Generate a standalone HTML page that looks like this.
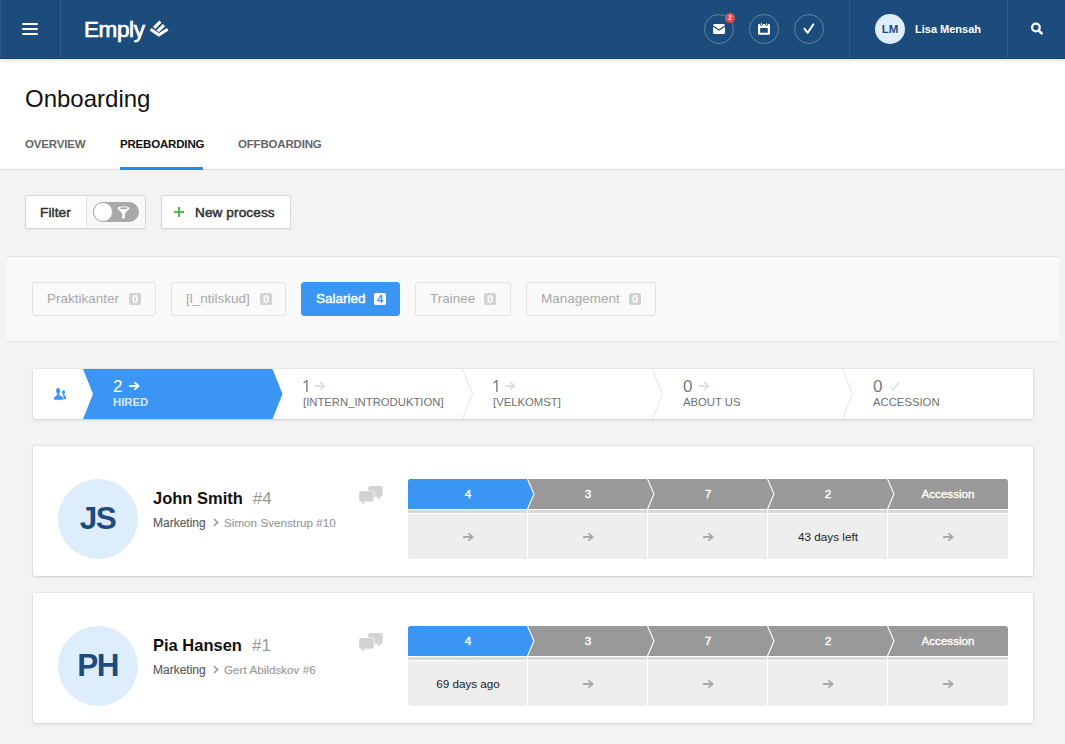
<!DOCTYPE html>
<html><head><meta charset="utf-8">
<style>
*{box-sizing:border-box;margin:0;padding:0}
html,body{width:1065px;height:744px;overflow:hidden;background:#f3f3f3;font-family:"Liberation Sans",sans-serif;color:#222}
.abs{position:absolute}
#hdr{position:absolute;left:0;top:0;width:1065px;height:59px;background:#1c4c7c;border-bottom:1px solid #133f6f;box-shadow:0 1px 5px rgba(0,0,0,0.13);z-index:2}
.vdiv{position:absolute;top:0;width:1px;height:58px;background:#345e88}
.circ{position:absolute;top:14px;width:30px;height:30px;border-radius:50%;border:1px solid rgba(255,255,255,0.3)}
#top{position:absolute;left:0;top:59px;width:1065px;height:111px;background:#fff;border-bottom:1px solid #e2e2e2}
h1{position:absolute;left:25px;top:85px;font-size:24px;font-weight:normal;color:#111}
.tab{position:absolute;top:138px;font-size:11.5px;font-weight:bold;color:#666;letter-spacing:-0.18px}
.btn{position:absolute;top:195px;height:34px;background:#fff;border:1px solid #d6d6d6;border-radius:2px;box-shadow:0 1px 1px rgba(0,0,0,0.06)}
#cats{position:absolute;left:7px;top:256px;width:1052px;height:86px;background:#f9f9f9;border-top:1px solid #e6e6e6;border-bottom:1px solid #e6e6e6}
.chip{position:absolute;top:282px;height:34px;border:1px solid #e2e2e2;border-radius:3px;background:#fafafa;color:#a8a8a8;font-size:13.5px;line-height:32px}
.chip b{display:block;font-weight:bold;font-size:11px;background:#d2d2d2;color:#fff;width:12px;height:12px;line-height:12px;text-align:center;border-radius:2px;position:absolute;top:10px}
#pipe{position:absolute;left:33px;top:369px;width:1000px;height:50px;background:#fff;border-radius:2px;box-shadow:0 0 0 1px rgba(0,0,0,0.035),0 1px 3px rgba(0,0,0,0.13)}
.card{position:absolute;left:33px;width:1000px;height:130px;background:#fff;border-radius:2px;box-shadow:0 0 0 1px rgba(0,0,0,0.035),0 1px 3px rgba(0,0,0,0.13)}
.ct{position:absolute;left:14px;top:0}
.pn{position:absolute;top:8px;font-size:17px;color:#7a7a7a;line-height:20px;white-space:nowrap}
.ia{position:absolute;left:16px;top:5px;line-height:0}
.pl{position:absolute;top:27px;font-size:11.3px;color:#707070;line-height:12px;white-space:nowrap}
.av{position:absolute;left:25px;top:33px;width:80px;height:80px;border-radius:50%;background:#deedfc;color:#1e4b7e;font-size:31.5px;font-weight:bold;text-align:center;line-height:79px;letter-spacing:-1.6px;text-indent:-1px}
.nm{position:absolute;left:120px;top:43px;font-size:16.5px;font-weight:bold;color:#111;white-space:nowrap}
.nm span{font-weight:normal;color:#999;margin-left:10px;font-size:17px}
.bc{position:absolute;left:120px;top:70px;font-size:12px;color:#5f5f5f;white-space:nowrap;width:250px;-webkit-text-stroke:0.2px #5f5f5f}
.bc span{position:absolute;left:71px;top:0;color:#999;font-size:11.6px;letter-spacing:0.05px;-webkit-text-stroke:0.15px #999}
.sh{position:absolute;width:120px;height:30px;line-height:30px;text-align:center;color:#fff;font-size:11.8px;-webkit-text-stroke:0.4px #fff}
.sb{position:absolute;width:120px;height:45px;line-height:46px;text-align:center;color:#222;font-size:11.7px}
.sb svg{vertical-align:middle;margin-top:-1px;margin-left:1px}
</style></head><body>
<div id="hdr">
  <div class="vdiv" style="left:0;background:#2e5788"></div>
  <div class="abs" style="left:22px;top:23px;width:16px;height:2px;background:#fff;border-radius:1px"></div>
  <div class="abs" style="left:22px;top:28px;width:16px;height:2px;background:#fff;border-radius:1px"></div>
  <div class="abs" style="left:22px;top:33px;width:16px;height:2px;background:#fff;border-radius:1px"></div>
  <div class="vdiv" style="left:60px"></div>
  <div class="abs" style="left:84px;top:17px;font-size:22.5px;color:#fff;-webkit-text-stroke:0.7px #fff;letter-spacing:-0.4px">Emply</div>
  <svg class="abs" style="left:146px;top:17px" width="26" height="24" viewBox="146 17 26 24">
    <path d="M150.6 29.2 L158.9 35 L167.6 29.2" fill="none" stroke="#fff" stroke-width="3.1" stroke-linejoin="round"/>
    <path d="M157.6 31.2 L164 25.2" fill="none" stroke="#fff" stroke-width="3.1"/>
    <path d="M154.1 27.8 L160.4 21.6" fill="none" stroke="#fff" stroke-width="3.1"/>
  </svg>
  <div class="circ" style="left:704px"></div>
  <svg class="abs" style="left:713px;top:24px" width="12" height="10" viewBox="0 0 12 10">
    <rect x="0" y="0" width="12" height="10" rx="1.5" fill="#fff"/>
    <path d="M0 2 L6 6 L12 2" fill="none" stroke="#1c4c7c" stroke-width="1.05"/>
  </svg>
  <div class="abs" style="left:725px;top:13px;width:10px;height:10px;border-radius:50%;background:#e84a4a;color:#fff;font-size:6.5px;font-weight:bold;text-align:center;line-height:10px">2</div>
  <div class="circ" style="left:749px"></div>
  <svg class="abs" style="left:758px;top:23px" width="12" height="12" viewBox="0 0 12 12">
    <path d="M1.2 1.1 H10.8 A1.2 1.2 0 0 1 12 2.3 V10.6 A1.2 1.2 0 0 1 10.8 11.8 H1.2 A1.2 1.2 0 0 1 0 10.6 V2.3 A1.2 1.2 0 0 1 1.2 1.1 Z M2.1 5.1 V9.7 H9.8 V5.1 Z" fill="#fff" fill-rule="evenodd"/>
    <path d="M2.1 1 H4.7 V1.6 A1.3 1.3 0 0 1 2.1 1.6 Z M7.2 1 H9.8 V1.6 A1.3 1.3 0 0 1 7.2 1.6 Z" fill="#1c4c7c"/>
    <rect x="2.95" y="0" width="0.95" height="1.9" rx="0.45" fill="#fff"/>
    <rect x="8.05" y="0" width="0.95" height="1.9" rx="0.45" fill="#fff"/>
  </svg>
  <div class="circ" style="left:794px"></div>
  <svg class="abs" style="left:803px;top:23px" width="12" height="12" viewBox="0 0 12 12">
    <path d="M1.5 5.6 L4.6 9.9 L10.4 1.4" fill="none" stroke="#fff" stroke-width="1.9" stroke-linecap="round" stroke-linejoin="round"/>
  </svg>
  <div class="vdiv" style="left:849px"></div>
  <div class="abs" style="left:875px;top:14px;width:30px;height:30px;border-radius:50%;background:#deeefc;color:#1e4a7a;font-size:11.5px;font-weight:bold;text-align:center;line-height:30px">LM</div>
  <div class="abs" style="left:915px;top:23px;font-size:11px;font-weight:bold;color:#fff">Lisa Mensah</div>
  <div class="vdiv" style="left:1007px"></div>
  <svg class="abs" style="left:1031px;top:22px" width="13" height="13" viewBox="0 0 13 13">
    <circle cx="4.9" cy="5.5" r="3.8" fill="none" stroke="#fff" stroke-width="2.3"/>
    <path d="M7.6 8.3 L10.6 11.4" stroke="#fff" stroke-width="2.6" stroke-linecap="round"/>
  </svg>
</div>

<div id="top"></div>
<h1>Onboarding</h1>
<div class="tab" style="left:25px">OVERVIEW</div>
<div class="tab" style="left:120px;color:#111">PREBOARDING</div>
<div class="abs" style="left:120px;top:167px;width:83px;height:3px;background:#1a8df6"></div>
<div class="tab" style="left:238px">OFFBOARDING</div>


<!-- buttons -->
<div class="btn" style="left:25px;width:121px;overflow:hidden">
  <div class="abs" style="left:60px;top:0;width:60px;height:32px;background:#f8f8f8;border-left:1px solid #e4e4e4"></div>
  <div class="abs" style="left:14px;top:8.5px;font-size:13.6px;color:#333;-webkit-text-stroke:0.5px #333;letter-spacing:0.1px">Filter</div>
  <div class="abs" style="left:67px;top:6px;width:46px;height:20px;border-radius:10px;background:#a8a8a8"></div>
  <div class="abs" style="left:67px;top:6px;width:20px;height:20px;border-radius:50%;background:#fff;border:1px solid #b0b0b0"></div>
  <svg class="abs" style="left:91px;top:10px" width="13" height="13" viewBox="0 0 13 13">
    <ellipse cx="6.5" cy="2.4" rx="6" ry="2.2" fill="#fff"/>
    <path d="M0.5 2.4 L5.2 7.6 V12.5 H7.8 V7.6 L12.5 2.4 Z" fill="#fff"/>
    <ellipse cx="6.5" cy="2.2" rx="4" ry="1" fill="#a8a8a8"/>
  </svg>
</div>
<div class="btn" style="left:161px;width:130px">
  <svg class="abs" style="left:12px;top:11px" width="10" height="10" viewBox="0 0 10 10">
    <rect x="4" y="0" width="2" height="10" fill="#4cba4c"/>
    <rect x="0" y="4" width="10" height="2" fill="#4cba4c"/>
  </svg>
  <div class="abs" style="left:33px;top:8.5px;font-size:13.6px;color:#333;-webkit-text-stroke:0.5px #333;letter-spacing:0.1px">New process</div>
</div>

<div id="cats"></div>
<div class="chip" style="left:32px;width:124px"><span class="ct">Praktikanter</span><b style="left:96px">0</b></div>
<div class="chip" style="left:171px;width:115px"><span class="ct">[l_ntilskud]</span><b style="left:88px">0</b></div>
<div class="chip" style="left:301px;width:99px;background:#3b96f3;border-color:#3b96f3;color:#fff"><span class="ct" style="font-size:13.5px;-webkit-text-stroke:0.4px #fff">Salaried</span><b style="left:72px;background:#fff;color:#3b96f3">4</b></div>
<div class="chip" style="left:415px;width:96px"><span class="ct">Trainee</span><b style="left:68px">0</b></div>
<div class="chip" style="left:526px;width:130px"><span class="ct">Management</span><b style="left:102px">0</b></div>

<!-- pipeline -->
<div id="pipe">
  <svg class="abs" style="left:0;top:0" width="1000" height="50" viewBox="33 369 1000 50">
    <path d="M83 369 H272.5 L282.5 394 L272.5 419 H83 L93 394 Z" fill="#3b96f3"/>
    <path d="M462.5 369 L472.5 394 L462.5 419" fill="none" stroke="#e6e6e6" stroke-width="1"/>
    <path d="M652.5 369 L662.5 394 L652.5 419" fill="none" stroke="#e6e6e6" stroke-width="1"/>
    <path d="M842.5 369 L852.5 394 L842.5 419" fill="none" stroke="#e6e6e6" stroke-width="1"/>
  </svg>
  <svg class="abs" style="left:21px;top:19px" width="13" height="13" viewBox="0 0 13 13">
    <ellipse cx="9.5" cy="4.1" rx="1.5" ry="1.85" fill="#3b96f3"/>
    <path d="M8.9 5.6 H10.2 V7.1 C11.3 7.5 12 8.2 12 9.3 V11 H9.4 V8.4 Z" fill="#3b96f3"/>
    <path d="M2.9 5.2 H5.4 V7.4 C7.6 7.9 9.3 8.6 9.3 9.8 V11.8 H0.1 V9.8 C0.1 8.6 1.6 7.9 2.9 7.4 Z" fill="#3b96f3" stroke="#fff" stroke-width="0.9" paint-order="stroke"/>
    <ellipse cx="4.1" cy="2.8" rx="2" ry="2.75" fill="#3b96f3"/>
  </svg>
  <div class="pn" style="left:80px;color:#fff">2<span class="ia"><svg width="11" height="8" viewBox="0 0 11 8"><path d="M0.5 4 H9 M6 0.9 L9.5 4 L6 7.1" fill="none" stroke="#fff" stroke-width="1.9" stroke-linecap="round" stroke-linejoin="round"/></svg></span></div>
  <div class="pl" style="left:80px;color:rgba(255,255,255,0.8);font-weight:bold">HIRED</div>
  <div class="pn" style="left:270px"><svg width="6" height="13" viewBox="0 0 6 13" style="position:absolute;left:0;top:3px"><path d="M0.6 3 L3.9 0.5 V11.9" fill="none" stroke="#7a7a7a" stroke-width="1.35" stroke-linejoin="round"/></svg><span class="ia" style="left:12px"><svg width="11" height="8" viewBox="0 0 11 8"><path d="M0.5 4 H9 M6 0.9 L9.5 4 L6 7.1" fill="none" stroke="#e0e0e0" stroke-width="1.9" stroke-linecap="round" stroke-linejoin="round"/></svg></span></div>
  <div class="pl" style="left:270px">[INTERN_INTRODUKTION]</div>
  <div class="pn" style="left:460px"><svg width="6" height="13" viewBox="0 0 6 13" style="position:absolute;left:0;top:3px"><path d="M0.6 3 L3.9 0.5 V11.9" fill="none" stroke="#7a7a7a" stroke-width="1.35" stroke-linejoin="round"/></svg><span class="ia" style="left:12px"><svg width="11" height="8" viewBox="0 0 11 8"><path d="M0.5 4 H9 M6 0.9 L9.5 4 L6 7.1" fill="none" stroke="#e0e0e0" stroke-width="1.9" stroke-linecap="round" stroke-linejoin="round"/></svg></span></div>
  <div class="pl" style="left:460px">[VELKOMST]</div>
  <div class="pn" style="left:650px">0<span class="ia"><svg width="11" height="8" viewBox="0 0 11 8"><path d="M0.5 4 H9 M6 0.9 L9.5 4 L6 7.1" fill="none" stroke="#e0e0e0" stroke-width="1.9" stroke-linecap="round" stroke-linejoin="round"/></svg></span></div>
  <div class="pl" style="left:650px">ABOUT US</div>
  <div class="pn" style="left:840px">0<span class="ia" style="top:3.5px;left:16px"><svg width="11" height="11" viewBox="0 0 11 11"><path d="M1 5.6 L4.2 9 L9.8 1.6" fill="none" stroke="#e2e2e2" stroke-width="1.6" stroke-linecap="round" stroke-linejoin="round"/></svg></span></div>
  <div class="pl" style="left:840px">ACCESSION</div>
</div>
<div class="card" style="top:446px">
  <div class="av">JS</div>
  <div class="nm">John Smith<span>#4</span></div>
  <div class="bc">Marketing<svg width="6" height="9" viewBox="0 0 6 9" style="position:absolute;left:60px;top:2px"><path d="M1 1 L4.5 4.5 L1 8" fill="none" stroke="#9a9a9a" stroke-width="1.7"/></svg><span>Simon Svenstrup #10</span></div>
  <svg class="abs" style="left:326px;top:39px" width="25" height="21" viewBox="0 0 25 21">
    <rect x="9.1" y="1" width="14.7" height="10.7" rx="2" fill="#d3d3d3"/>
    <path d="M17.3 11.5 L20.9 15 L21.2 11.5 Z" fill="#d3d3d3"/>
    <rect x="0.2" y="6.1" width="14.6" height="10.7" rx="2" fill="#d3d3d3" stroke="#fff" stroke-width="1.4" paint-order="stroke"/>
    <path d="M3 16.5 L3.3 19.8 L6.2 16.5 Z" fill="#d3d3d3"/>
  </svg>
  <svg class="abs" style="left:375px;top:33px" width="600" height="81" viewBox="0 0 600 81">
    <path d="M0 35 H600 V77 A3 3 0 0 1 597 80 H3 A3 3 0 0 1 0 77 Z" fill="#eeeeee"/>
    <rect x="0" y="31" width="600" height="3" fill="#d9d9d9"/>
    <path d="M3 0 H596 A3 3 0 0 1 600 3 V30 H0 V3 A3 3 0 0 1 3 0 Z" fill="#999999"/>
    <path d="M3 0 H119 L125.5 15 L119 30 H0 V3 A3 3 0 0 1 3 0 Z" fill="#3b96f3"/>
    <path d="M119.5 0 L126.0 15 L119.5 30" fill="none" stroke="#fff" stroke-width="1.1"/>
    <rect x="119" y="30" width="1" height="51" fill="#fff"/>
    <path d="M239.5 0 L246.0 15 L239.5 30" fill="none" stroke="#fff" stroke-width="1.1"/>
    <rect x="239" y="30" width="1" height="51" fill="#fff"/>
    <path d="M359.5 0 L366.0 15 L359.5 30" fill="none" stroke="#fff" stroke-width="1.1"/>
    <rect x="359" y="30" width="1" height="51" fill="#fff"/>
    <path d="M479.5 0 L486.0 15 L479.5 30" fill="none" stroke="#fff" stroke-width="1.1"/>
    <rect x="479" y="30" width="1" height="51" fill="#fff"/>
  </svg>
  <div class="sh" style="left:375px;top:33px">4</div>
  <div class="sh" style="left:495px;top:33px">3</div>
  <div class="sh" style="left:615px;top:33px">7</div>
  <div class="sh" style="left:735px;top:33px">2</div>
  <div class="sh" style="left:855px;top:33px;font-size:11.6px;-webkit-text-stroke:0.35px #fff">Accession</div>
  <div class="sb" style="left:375px;top:68px"><svg width="11" height="8" viewBox="0 0 11 8"><path d="M0.5 4 H9 M6 0.9 L9.5 4 L6 7.1" fill="none" stroke="#aaaaaa" stroke-width="1.9" stroke-linecap="round" stroke-linejoin="round"/></svg></div>
  <div class="sb" style="left:495px;top:68px"><svg width="11" height="8" viewBox="0 0 11 8"><path d="M0.5 4 H9 M6 0.9 L9.5 4 L6 7.1" fill="none" stroke="#aaaaaa" stroke-width="1.9" stroke-linecap="round" stroke-linejoin="round"/></svg></div>
  <div class="sb" style="left:615px;top:68px"><svg width="11" height="8" viewBox="0 0 11 8"><path d="M0.5 4 H9 M6 0.9 L9.5 4 L6 7.1" fill="none" stroke="#aaaaaa" stroke-width="1.9" stroke-linecap="round" stroke-linejoin="round"/></svg></div>
  <div class="sb" style="left:735px;top:68px">43 days left</div>
  <div class="sb" style="left:855px;top:68px"><svg width="11" height="8" viewBox="0 0 11 8"><path d="M0.5 4 H9 M6 0.9 L9.5 4 L6 7.1" fill="none" stroke="#aaaaaa" stroke-width="1.9" stroke-linecap="round" stroke-linejoin="round"/></svg></div>
</div>
<div class="card" style="top:593px">
  <div class="av">PH</div>
  <div class="nm">Pia Hansen<span>#1</span></div>
  <div class="bc">Marketing<svg width="6" height="9" viewBox="0 0 6 9" style="position:absolute;left:60px;top:2px"><path d="M1 1 L4.5 4.5 L1 8" fill="none" stroke="#9a9a9a" stroke-width="1.7"/></svg><span>Gert Abildskov #6</span></div>
  <svg class="abs" style="left:326px;top:39px" width="25" height="21" viewBox="0 0 25 21">
    <rect x="9.1" y="1" width="14.7" height="10.7" rx="2" fill="#d3d3d3"/>
    <path d="M17.3 11.5 L20.9 15 L21.2 11.5 Z" fill="#d3d3d3"/>
    <rect x="0.2" y="6.1" width="14.6" height="10.7" rx="2" fill="#d3d3d3" stroke="#fff" stroke-width="1.4" paint-order="stroke"/>
    <path d="M3 16.5 L3.3 19.8 L6.2 16.5 Z" fill="#d3d3d3"/>
  </svg>
  <svg class="abs" style="left:375px;top:33px" width="600" height="81" viewBox="0 0 600 81">
    <path d="M0 35 H600 V77 A3 3 0 0 1 597 80 H3 A3 3 0 0 1 0 77 Z" fill="#eeeeee"/>
    <rect x="0" y="31" width="600" height="3" fill="#d9d9d9"/>
    <path d="M3 0 H596 A3 3 0 0 1 600 3 V30 H0 V3 A3 3 0 0 1 3 0 Z" fill="#999999"/>
    <path d="M3 0 H119 L125.5 15 L119 30 H0 V3 A3 3 0 0 1 3 0 Z" fill="#3b96f3"/>
    <path d="M119.5 0 L126.0 15 L119.5 30" fill="none" stroke="#fff" stroke-width="1.1"/>
    <rect x="119" y="30" width="1" height="51" fill="#fff"/>
    <path d="M239.5 0 L246.0 15 L239.5 30" fill="none" stroke="#fff" stroke-width="1.1"/>
    <rect x="239" y="30" width="1" height="51" fill="#fff"/>
    <path d="M359.5 0 L366.0 15 L359.5 30" fill="none" stroke="#fff" stroke-width="1.1"/>
    <rect x="359" y="30" width="1" height="51" fill="#fff"/>
    <path d="M479.5 0 L486.0 15 L479.5 30" fill="none" stroke="#fff" stroke-width="1.1"/>
    <rect x="479" y="30" width="1" height="51" fill="#fff"/>
  </svg>
  <div class="sh" style="left:375px;top:33px">4</div>
  <div class="sh" style="left:495px;top:33px">3</div>
  <div class="sh" style="left:615px;top:33px">7</div>
  <div class="sh" style="left:735px;top:33px">2</div>
  <div class="sh" style="left:855px;top:33px;font-size:11.6px;-webkit-text-stroke:0.35px #fff">Accession</div>
  <div class="sb" style="left:375px;top:68px">69 days ago</div>
  <div class="sb" style="left:495px;top:68px"><svg width="11" height="8" viewBox="0 0 11 8"><path d="M0.5 4 H9 M6 0.9 L9.5 4 L6 7.1" fill="none" stroke="#aaaaaa" stroke-width="1.9" stroke-linecap="round" stroke-linejoin="round"/></svg></div>
  <div class="sb" style="left:615px;top:68px"><svg width="11" height="8" viewBox="0 0 11 8"><path d="M0.5 4 H9 M6 0.9 L9.5 4 L6 7.1" fill="none" stroke="#aaaaaa" stroke-width="1.9" stroke-linecap="round" stroke-linejoin="round"/></svg></div>
  <div class="sb" style="left:735px;top:68px"><svg width="11" height="8" viewBox="0 0 11 8"><path d="M0.5 4 H9 M6 0.9 L9.5 4 L6 7.1" fill="none" stroke="#aaaaaa" stroke-width="1.9" stroke-linecap="round" stroke-linejoin="round"/></svg></div>
  <div class="sb" style="left:855px;top:68px"><svg width="11" height="8" viewBox="0 0 11 8"><path d="M0.5 4 H9 M6 0.9 L9.5 4 L6 7.1" fill="none" stroke="#aaaaaa" stroke-width="1.9" stroke-linecap="round" stroke-linejoin="round"/></svg></div>
</div>
</body></html>
